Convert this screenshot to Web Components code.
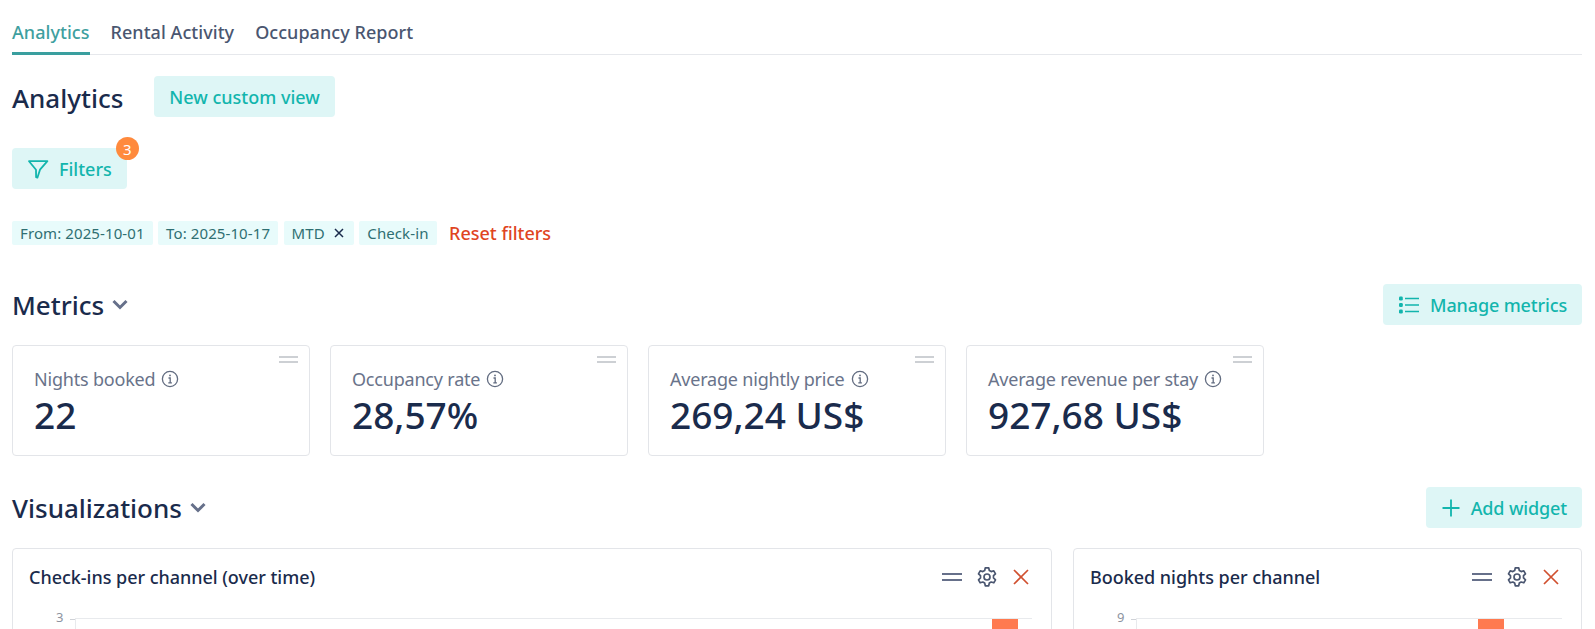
<!DOCTYPE html>
<html lang="en"><head><meta charset="utf-8"><title>Analytics</title>
<style>
html,body{margin:0;padding:0;height:629px;overflow:hidden;background:#fff}
body{font-family:"Noto Sans","Open Sans",sans-serif;color:#1a2b4c}
</style></head><body>
<an-page>
  <an-tabs slot="tabs"></an-tabs>
  <an-title-row slot="title"></an-title-row>
  <an-filters slot="filters"></an-filters>
  <an-section slot="metrics" style="margin-top:39px" heading="Metrics" action="Manage metrics" icon="list">
    <div style="display:flex;gap:20px">
      <an-metric label="Nights booked" value="22"></an-metric>
      <an-metric label="Occupancy rate" value="28,57%"></an-metric>
      <an-metric label="Average nightly price" value="269,24 US$"></an-metric>
      <an-metric label="Average revenue per stay" value="927,68 US$"></an-metric>
    </div>
  </an-section>
  <an-section slot="viz" style="margin-top:31px" heading="Visualizations" action="Add widget" icon="plus">
    <div style="display:flex;gap:21px">
      <an-widget style="flex:0 0 1040px" heading="Check-ins per channel (over time)" tick="3" bar="14"></an-widget>
      <an-widget style="flex:0 0 509px" heading="Booked nights per channel" tick="9" bar="58"></an-widget>
    </div>
  </an-section>
</an-page>
<script>
const ICONS={
 list:'<svg width="22" height="22" viewBox="0 0 22 22" fill="none" stroke="currentColor" stroke-width="1.7"><path d="M7 4.5h14M7 11h14M7 17.5h14"/><g fill="currentColor" stroke="none"><rect x="1" y="2.6" width="3.8" height="3.8" rx="1.2"/><rect x="1" y="9.1" width="3.8" height="3.8" rx="1.2"/><rect x="1" y="15.6" width="3.8" height="3.8" rx="1.2"/></g></svg>',
 plus:'<svg width="20" height="20" viewBox="0 0 20 20" fill="none" stroke="currentColor" stroke-width="1.8"><path d="M10 1.5v17M1.5 10h17"/></svg>',
 filter:'<svg width="22" height="22" viewBox="0 0 22 22" fill="none" stroke="currentColor" stroke-width="1.8" stroke-linejoin="round"><path d="M2 3.2h18.4l-7.4 8.5-2.6 8-1.3-.5L9 11.7z"/></svg>'
};
function def(name,css,html){
  customElements.define(name,class extends HTMLElement{
    connectedCallback(){
      if(this.shadowRoot)return;
      const a=n=>this.getAttribute(n)||'';
      this.attachShadow({mode:'open'}).innerHTML='<style>'+css+'</style>'+html(a);
    }
  });
}
def('an-page',':host{display:block;padding:0 13px 0 12px;width:1570px;box-sizing:content-box}',
 ()=>'<slot name="tabs"></slot><slot name="title"></slot><slot name="filters"></slot><slot name="metrics"></slot><slot name="viz"></slot>');
def('an-tabs',`:host{display:flex;gap:21px;border-bottom:1px solid #e6e8ec;height:55px;box-sizing:border-box;align-items:flex-end;font-size:18px;font-weight:500;color:#4a5670;letter-spacing:.05px}
 span{display:block;padding-bottom:9px;line-height:25px;height:25px}
 .on{color:#3f9f9f;border-bottom:3px solid #3a9f9f;height:25px;padding-bottom:7px;margin-bottom:-1px}`,
 ()=>'<span class="on">Analytics</span><span>Rental Activity</span><span>Occupancy Report</span>');
def('an-btn',`:host{display:inline-flex;align-items:center;gap:10px;height:41px;padding:0 15px;background:#def6f6;border-radius:4px;color:#12b5ad;font-size:18px;font-weight:500;box-sizing:border-box;white-space:nowrap;position:relative}
 svg{display:block}`,
 a=>(ICONS[a('icon')]||'')+'<slot></slot>');
def('an-title-row',`:host{display:flex;align-items:center;gap:31px;margin-top:21px;height:41px}
 h1{margin:0;padding-top:3px;font-size:26px;font-weight:500;color:#1a2b4c;line-height:38px}`,
 ()=>'<h1>Analytics</h1><an-btn>New custom view</an-btn>');
def('an-filters',`:host{display:block}
 .f{margin-top:31px;display:inline-flex;position:relative}
 .badge{position:absolute;right:-12px;top:-11px;width:23px;height:23px;border-radius:50%;background:#ff8a3d;color:#fff;font-size:15px;display:flex;align-items:center;justify-content:center}
 .chips{display:flex;align-items:center;gap:5.5px;margin-top:32px;height:24px}
 .c{display:flex;align-items:center;gap:9px;height:24px;padding:0 8px;background:#e8fbfb;border-radius:2px;color:#2f6f72;font-size:15px;white-space:nowrap;letter-spacing:.1px}
 .c svg{display:block;margin-right:2px}
 .r{margin-left:7px;color:#e0451f;font-size:18px;font-weight:500}`,
 ()=>`<div class="f"><an-btn icon="filter">Filters</an-btn><span class="badge">3</span></div>
 <div class="chips"><span class="c">From: 2025-10-01</span><span class="c">To: 2025-10-17</span><span class="c">MTD<svg width="10" height="10" viewBox="0 0 10 10" stroke="#1a2b4c" stroke-width="1.5"><path d="M1 1l8 8M9 1l-8 8"/></svg></span><span class="c">Check-in</span><span class="r">Reset filters</span></div>`);
def('an-section',`:host{display:block}
 .h{display:flex;align-items:center;justify-content:space-between;height:41px}
 h2{margin:0;font-size:26px;font-weight:500;color:#1a2b4c;display:flex;align-items:center;gap:8px}
 svg{display:block}
 an-btn{letter-spacing:-.14px}
 .b{margin-top:20px}`,
 a=>`<div class="h"><h2>${a('heading')}<svg width="16" height="11" viewBox="0 0 16 11" fill="none" stroke="#66708a" stroke-width="3"><path d="M1.5 2l6.5 6.5L14.5 2"/></svg></h2><an-btn icon="${a('icon')}">${a('action')}</an-btn></div><div class="b"><slot></slot></div>`);
def('an-metric',`:host{display:block;width:298px;height:111px;box-sizing:border-box;border:1px solid #e3e5e9;border-radius:4px;padding:20px 21px;position:relative;background:#fff}
 .g{position:absolute;top:10px;right:11px;width:19px;border-top:2px solid #cdd0d4;border-bottom:2px solid #cdd0d4;height:3px}
 .l{display:flex;align-items:center;gap:6px;color:#69738a;font-size:18px;line-height:26px;letter-spacing:-.2px}
 .v{font-size:37px;font-weight:500;color:#1a2b4c;line-height:46px;white-space:nowrap}
 svg{display:block}`,
 a=>`<div class="g"></div><div class="l">${a('label')}<svg width="18" height="18" viewBox="0 0 18 18" fill="none" stroke="#626c80" stroke-width="1.3"><circle cx="9" cy="9" r="7.6"/><path d="M7.5 8h1.7v4.6M7.3 12.8h3.6"/><circle cx="9" cy="5.4" r=".9" fill="#626c80" stroke="none"/></svg></div><div class="v">${a('value')}</div>`);
def('an-widget',`:host{display:block;height:300px;box-sizing:border-box;border:1px solid #e3e5e9;border-radius:4px;padding:0 16px;background:#fff;position:relative}
 .t{display:flex;align-items:center;justify-content:space-between;height:56px}
 h3{margin:0;font-size:18px;font-weight:500;color:#1a2b4c;letter-spacing:-.03px}
 .i{display:flex;align-items:center;gap:13px;margin-right:5px}
 svg{display:block}
 .p{position:relative;margin-top:12.5px;border-top:1px solid #e8eaed;margin-left:46px;margin-right:3px;height:100px}
 .tk{position:absolute;left:-19px;top:-12px;font-size:13px;color:#8d93a0;line-height:20px}
 .d{position:absolute;left:-5px;top:0;width:5px;border-top:1px solid #cfd2d7}
 .a{position:absolute;left:0;top:0;bottom:0;border-left:1px solid #e8eaed}
 .bar{position:absolute;top:0;width:26px;height:40px;background:#ff7a50}`,
 a=>`<div class="t"><h3>${a('heading')}</h3><div class="i"><svg width="20" height="10" viewBox="0 0 20 10" fill="none" stroke="#66708a" stroke-width="2"><path d="M0 2h20M0 8h20"/></svg><svg width="24" height="24" viewBox="0 0 24 24" fill="none" stroke="#4a5670" stroke-width="1.7" stroke-linejoin="round"><path d="M10.3 2.8h3.4l.6 2.7 1.9 1.1 2.6-.8 1.7 3-2 1.9v2.2l2 1.9-1.7 3-2.6-.8-1.9 1.1-.6 2.7h-3.4l-.6-2.7-1.9-1.1-2.6.8-1.7-3 2-1.9v-2.2l-2-1.9 1.7-3 2.6.8 1.9-1.1z"/><circle cx="12" cy="12" r="3"/></svg><svg width="18" height="18" viewBox="0 0 18 18" fill="none" stroke="#d0502f" stroke-width="1.7"><path d="M2 2l14 14M16 2L2 16"/></svg></div></div><div class="p"><span class="tk">${a('tick')}</span><span class="d"></span><span class="a"></span><span class="bar" style="right:${a('bar')}px"></span></div>`);
</script>
</body></html>
